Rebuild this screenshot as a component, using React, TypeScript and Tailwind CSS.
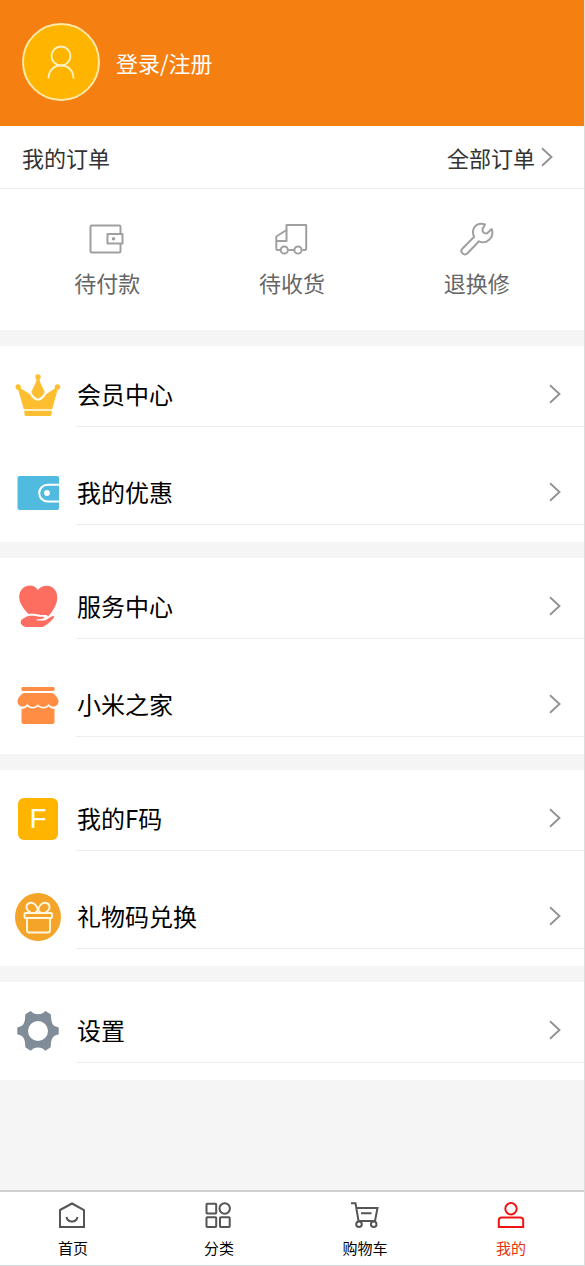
import type { ReactNode } from 'react';

const CrownIcon = () => (
  <svg width="46" height="48" viewBox="0 0 46 48" fill="#fdbf30" aria-hidden="true">
    <circle cx="23" cy="6" r="2.700" />
    <circle cx="3.200" cy="16" r="2.700" />
    <circle cx="42.500" cy="16" r="2.700" />
    <path d="M22 6h2l1.200 5.500L29.800 21Q27.500 26 23 27.800 18.500 26 16.200 21l4.600-9.500z" />
    <path d="M2.800 17.500l2-.8L15 23.200Q17.500 28.500 23 29.800 28.500 28.500 31 23.200l10-6.500 2 .8L37.200 38.200H8.800z" />
    <path d="M9.200 39.700h27.800l-.6 4q-.2 1.300-1.400 1.300H11q-1.200 0-1.400-1.300z" />
  </svg>
);

const CouponIcon = () => (
  <svg width="46" height="48" viewBox="0 0 46 48" aria-hidden="true">
    <rect x="2.500" y="7" width="41.500" height="34" rx="2" fill="#50bbdf" />
    <path d="M44 15.800H32.500a8.300 8.300 0 0 0 0 16.600H44" fill="none" stroke="#fff" strokeWidth="2" />
    <circle cx="32" cy="24" r="2.900" fill="#fff" />
  </svg>
);

const HeartIcon = () => (
  <svg width="46" height="48" viewBox="0 0 46 48" fill="#fe6e60" aria-hidden="true">
    <path d="M23 7C19.500 1.500 12 1.500 8 5c-4.500 4-5 11-1.500 17 2 3.500 4.500 6.500 7 9 5-.8 8.500.2 12 1h5.500c1.500.3 2 1.300 2 1.500C37 29.500 42 22 42.300 15 42.500 7.500 37.500 2.700 32 2.700c-3.700 0-7 1.300-9 4.300z" />
    <path d="M10.500 34.200c4-2.400 9.500-1.400 14-.4h3.500c1.800 0 1.500 1.700-.3 2l-6 .8v1l7.500-.2c3-.3 6-3.700 8.500-4.400 1.600-.3 1.700 1 .9 2.100-3 4-7 7.200-10.800 8.900H12c-2 0-3.500-.5-5-2-2.500-2.500-1.500-5.500 3.500-7.800z" />
  </svg>
);

const StoreIcon = () => (
  <svg width="46" height="48" viewBox="0 0 46 48" fill="#ff8d43" aria-hidden="true">
    <rect x="6.500" y="6" width="33" height="4" rx="1.300" />
    <path d="M9 12h28c2 0 6.500 5.500 6.500 8 0 6-6.500 7.500-9.800 3-3 3.800-8 3.800-10.700.3-3 3.500-7.700 3.500-10.700-.3C9 27.500 2.500 26 2.500 20c0-2.500 4.500-8 6.500-8z" />
    <path d="M6.500 27.800c2.500 0 4.300-.8 5.800-2.300 3.200 2.600 7.500 2.600 10.700 0 3.200 2.600 7.500 2.600 10.700 0 1.500 1.500 3.300 2.300 5.800 2.300V41q0 2-2 2h-29q-2 0-2-2z" />
  </svg>
);

const GiftIcon = () => (
  <svg width="46" height="48" viewBox="0 0 46 48" aria-hidden="true">
    <ellipse cx="23" cy="24" rx="23" ry="24" fill="#f3a429" />
    <g fill="none" stroke="#fff7df" strokeWidth="1.900" strokeLinejoin="round">
      <rect x="9.500" y="20" width="27.500" height="5" rx="1" />
      <path d="M12 25.500V37q0 2.500 2 2.500h19q2 0 2-2.500V25.500" />
      <path d="M23 17C21.800 12 18.500 9.500 15.500 9.800 11.500 10.300 10.300 14.500 12.500 17l3 2.800M23 17l-2.800 2.800" />
      <path d="M23 17c1.200-5 4.500-7.500 7.500-7.200 4 .5 5.200 4.700 3 7.200l-3 2.800M23 17l2.800 2.800" />
    </g>
  </svg>
);

const GearIcon = () => (
  <svg width="46" height="48" viewBox="0 0 46 48" fill="#818c99" aria-hidden="true">
    <path
      fillRule="evenodd"
      d="M15.700 4l2.600 2.300Q23 8.300 27.700 6.300L30.300 4l5.500 3.200.5 5Q36.500 17 39.500 19l4.200 1.500v6.800L39.500 28.700Q36.500 30.700 36 35.600l-.3 4.700-5.400 3.400-2.600-2.300Q23 39.500 18.300 41.400l-2.600 2.300-5.400-3.400-.3-4.700Q9.500 30.700 6.500 28.700L2.300 27.300v-6.800L6.500 19Q9.500 17 10 12.200l.3-5z M23 14a10 10 0 1 0 0 20 10 10 0 0 0 0-20z"
    />
  </svg>
);

const FCodeIcon = () => (
  <span
    aria-hidden="true"
    className="flex h-[42px] w-10 items-center justify-center rounded-md bg-[#ffb400] font-['Liberation_Sans',sans-serif] text-[28px] leading-none text-white"
  >
    F
  </span>
);

const Chevron = () => (
  <svg className="shrink-0" width="12" height="20" viewBox="0 0 12 20" fill="none" stroke="#929292" strokeWidth="1.900" aria-hidden="true">
    <path d="M1 1.200 10.500 10 1 18.800" />
  </svg>
);

const orders = [
  {
    label: '待付款',
    icon: (
      <>
        <path d="M32.500 14V7.800q0-1.300-1.200-1.300H3.700q-1.200 0-1.200 1.300v24.400q0 1.300 1.200 1.300h27.600q1.200 0 1.200-1.300V24.500" />
        <path d="M19.500 15h15v9.500h-15z" />
        <circle cx="25.500" cy="19.700" r=".8" fill="#a0a0a0" />
      </>
    ),
  },
  {
    label: '待收货',
    icon: (
      <>
        <path d="M7 31H4.500q-1.200 0-1.200-1.300V17.500L13.500 11V6h19.700v23.500q0 1.500-1.200 1.500h-2.500M15.500 31h6" />
        <path d="M13.500 11v11H3.300" />
        <circle cx="11.300" cy="31" r="3.600" />
        <circle cx="25" cy="31" r="3.600" />
      </>
    ),
  },
  {
    label: '退换修',
    icon: (
      <path d="M27 5.500c-4-1.800-8.700-.5-10.800 3-1.700 2.800-1.700 6 0 9.300L4.500 29.500c-3.200 3.200 1.600 8.200 5 4.800l11.500-12c3.800 1.700 8 .8 10.800-2.200 2.600-2.800 3.300-6.600 1.900-10l-4.500 4.200q-5 .7-4.700-4.300z" />
    ),
  },
];

type MenuItem = { label: string; icon: ReactNode };

const menus: MenuItem[][] = [
  [
    { label: '会员中心', icon: <CrownIcon /> },
    { label: '我的优惠', icon: <CouponIcon /> },
  ],
  [
    { label: '服务中心', icon: <HeartIcon /> },
    { label: '小米之家', icon: <StoreIcon /> },
  ],
  [
    { label: '我的F码', icon: <FCodeIcon /> },
    { label: '礼物码兑换', icon: <GiftIcon /> },
  ],
  [{ label: '设置', icon: <GearIcon /> }],
];

const tabs = [
  {
    label: '首页',
    icon: (
      <>
        <path d="M2 10 14 3.500 26 10v17H2z" />
        <path d="M8.500 17q1 4.500 5.500 4.500t5.500-4.500" />
      </>
    ),
  },
  {
    label: '分类',
    icon: (
      <>
        <rect x="2.500" y="3.800" width="9.700" height="9.700" rx=".8" />
        <circle cx="20.700" cy="8.500" r="5.200" />
        <rect x="2.500" y="17.300" width="9.700" height="9.700" rx=".8" />
        <rect x="16" y="17.300" width="9.700" height="9.700" rx=".8" />
      </>
    ),
  },
  {
    label: '购物车',
    icon: (
      <>
        <path d="M1 3.200h4.500L8.500 21H25L27.500 8H6.500M11 13.300h10.500" />
        <circle cx="9" cy="24.200" r="2.800" fill="#fff" />
        <circle cx="23.700" cy="24.200" r="2.800" fill="#fff" />
      </>
    ),
  },
  {
    label: '我的',
    active: true,
    icon: (
      <>
        <circle cx="15" cy="8.800" r="5.700" />
        <path d="M2.800 27V20.500q0-3 3-3h18.400q3 0 3 3V27z" />
      </>
    ),
  },
];

const Header = () => (
  <header className="flex h-[126px] items-center gap-4 bg-[#f57f10] pb-[2px] pl-[22px]">
    <div className="flex size-[78px] items-center justify-center rounded-full border-2 border-[#ffe9a6] bg-[#ffb400]">
      <svg width="30" height="38" viewBox="0 0 30 38" fill="none" stroke="#fff3c4" strokeWidth="1.800" aria-hidden="true">
        <circle cx="15" cy="13" r="9.500" />
        <path d="M2.500 35.500C2.500 27.500 8 22.500 15 22.500S27.500 27.500 27.500 35.500" />
      </svg>
    </div>
    <a href="#login" className="text-[22px] leading-8 text-white">登录/注册</a>
  </header>
);

const Orders = () => (
  <section className="bg-white">
    <div className="flex h-[63px] items-center justify-between border-b border-[#ececec] pl-[22px] pr-[31px] text-[22px] leading-8 text-[#333]">
      <h2>我的订单</h2>
      <a href="#orders" className="flex items-center gap-1.5">
        全部订单
        <Chevron />
      </a>
    </div>
    <div className="grid h-[141px] grid-cols-3 px-[15px] pt-[30px]">
      {orders.map((order) => (
        <a key={order.label} href="#orders" className="flex flex-col items-center gap-[7px] text-[22px] leading-8 text-[#666]">
          <svg width="36" height="40" viewBox="1 0 36 40" fill="none" stroke="#a0a0a0" strokeWidth="2" strokeLinejoin="round" aria-hidden="true">
            {order.icon}
          </svg>
          {order.label}
        </a>
      ))}
    </div>
  </section>
);

const MenuRow = ({ label, icon }: MenuItem) => (
  <li className="h-[98px] pt-4">
    <a href="#menu" className="flex">
      <span className="flex h-[65px] w-[76px] shrink-0 items-center justify-center">{icon}</span>
      <span className="flex h-[65px] grow items-center justify-between border-b border-[#ededed] pl-px pr-[23px] text-2xl text-black">
        {label}
        <Chevron />
      </span>
    </a>
  </li>
);

const TabBar = () => (
  <nav className="sticky bottom-0 mt-auto grid h-[76px] grid-cols-4 border-b border-t-2 border-b-[#d5d9d9] border-t-[#d0d0d0] bg-white">
    {tabs.map((tab) => (
      <a
        key={tab.label}
        href="#tab"
        className={`flex flex-col items-center gap-1.5 pt-2 text-[15px] leading-6 ${tab.active ? 'text-[#e8320c]' : 'text-black'}`}
      >
        <svg
          className={tab.active ? 'text-[#ee1414]' : 'text-[#555]'}
          width="30"
          height="30"
          viewBox="0 0 30 30"
          fill="none"
          stroke="currentColor"
          strokeWidth="2"
          aria-hidden="true"
        >
          {tab.icon}
        </svg>
        {tab.label}
      </a>
    ))}
  </nav>
);

const App = () => {
  return (
    <div
      lang="zh-CN"
      className="flex min-h-screen flex-col border-r border-[#d9dddd] bg-[#f5f5f5] font-['Noto_Sans_CJK_SC',sans-serif]"
    >
      <Header />
      <main className="flex flex-col gap-4">
        <Orders />
        {menus.map((items) => (
          <ul key={items[0].label} className="bg-white">
            {items.map((item) => (
              <MenuRow key={item.label} {...item} />
            ))}
          </ul>
        ))}
      </main>
      <TabBar />
    </div>
  );
};

export default App;
